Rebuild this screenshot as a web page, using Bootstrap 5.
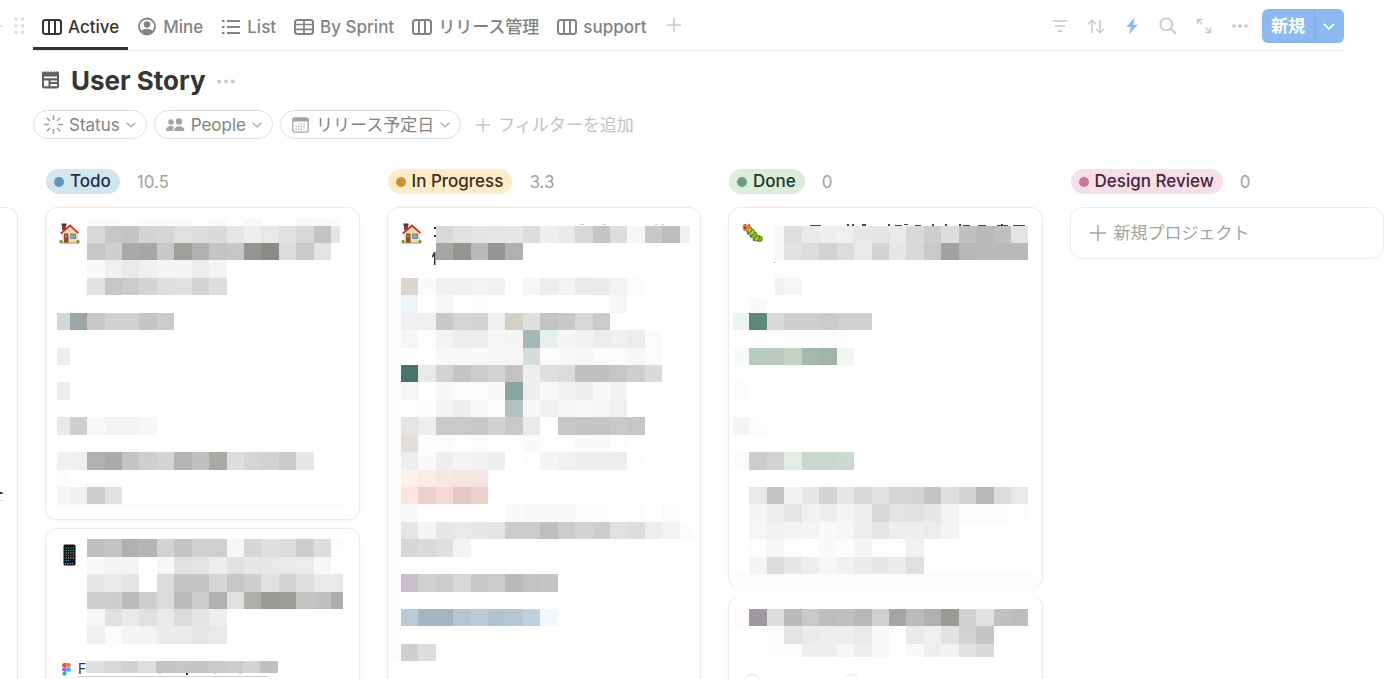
<!DOCTYPE html>
<html lang="ja">
<head>
<meta charset="utf-8">
<meta name="viewport" content="width=device-width, initial-scale=1">
<title>User Story</title>
<link href="https://cdn.jsdelivr.net/npm/bootstrap@5.3.0/dist/css/bootstrap.min.css" rel="stylesheet">
<style>
  body { font-family: Inter, "Noto Sans CJK JP", sans-serif; font-size: 17px; line-height: 24px; color: #37352f; background: #fff; }
  svg { display: block; flex: none; }
  .ico { fill: none; stroke: currentColor; stroke-width: 2; }
  .ico-thin { fill: none; stroke: currentColor; stroke-width: 1.6; }
  .topbar { margin-left: 33px; margin-right: 56px; height: 51px; border-bottom: 1px solid #e9e9e8; }
  .grip { position: absolute; left: 0; top: 16px; color: #dcdcda; }
  .view-tab { height: 50px; padding: 6px 9px 0; gap: 6px; font-weight: 500; color: #84837f; text-decoration: none; white-space: nowrap; border-bottom: 3px solid transparent; }
  .view-tab.active { color: #37352f; border-color: #37352f; }
  .tools { padding-top: 2px; }
  .tool { border: 0; background: none; padding: 0; width: 36px; height: 34px; color: #c8c8c6; display: flex; align-items: center; justify-content: center; }
  .tool.on { color: #8cbaf0; }
  .btn-new { background: #8bb9f0; color: #fff; border: 0; height: 34px; font-weight: 600; line-height: 34px; padding: 0 9px; }
  .btn-new:first-child { border-radius: 6px 0 0 6px; border-right: 1px solid #7fade4; }
  .btn-new:last-child { border-radius: 0 6px 6px 0; width: 29px; padding: 0 8px; }
  h1 { font-size: 26px; line-height: 32px; font-weight: 700; margin: 0; }
  .head { padding: 14px 0 0 41px; gap: 11px; }
  .head > svg:first-child { margin-bottom: 4px; }
  .head .more { color: #c8c8c6; }
  .filters { padding: 13px 33px 0; gap: 7px; }
  .pill { height: 29px; border: 1px solid #dededc; border-radius: 15px; background: #fff; color: #84837f; padding: 0 10px; gap: 6px; white-space: nowrap; }
  .pill .chev { color: #a5a4a1; }
  .add-filter { border: 0; background: none; color: #c3c3c1; padding: 0 8px; gap: 8px; }
  .board { gap: 27px; padding-right: 16px; margin-top: 30px; }
  .lane { flex: 1 1 0; min-width: 0; }
  .lane-edge { flex: 0 0 18px; margin-top: 38px; border: 1px solid #e9e9e9; border-left: 0; border-bottom: 0; border-radius: 0 12px 0 0; }
  .lane-head { height: 25px; gap: 17px; margin: 0 1px 13px; color: #a3a29f; }
  .status { border-radius: 13px; height: 25px; line-height: 25px; padding: 0 9px 0 8px; gap: 6px; font-weight: 500; }
  .dot { width: 10px; height: 10px; border-radius: 50%; background: currentColor; }
  .st-todo { background: #d3e5ef; color: #183347; } .st-todo .dot { background: #5b97bd; }
  .st-prog { background: #fdecc8; color: #402c1b; } .st-prog .dot { background: #cb912f; }
  .st-done { background: #dbeddb; color: #1c3829; } .st-done .dot { background: #6c9b7d; }
  .st-rev { background: #f5e0e9; color: #4c2337; } .st-rev .dot { background: #cd749f; }
  .story { border: 1px solid #ebebea; border-radius: 12px; box-shadow: 0 1px 3px rgba(15,15,15,.05); padding: 10px 4px 12px; overflow: hidden; background: #fff; flex: none; }
  .story-title { padding-left: 9px; gap: 7px; }
  .story-title > svg:first-child { margin-top: 5px; }
  .story-link { padding-left: 12px; gap: 7px; }
  .story-link > svg { margin-top: 2px; }
  .new-item { height: 52px; border: 1px solid #ebebea; border-radius: 12px; background: #fff; color: #a3a29f; padding: 0 19px; gap: 8px; text-align: left; }
  .figma-link { color: #37352f; text-decoration: none; font-size: 14px; line-height: 15px; border-bottom: 1px solid #cfcfcd; }
  .seam { left: 5px; right: 4px; top: -23px; height: 24px; background: linear-gradient(#fcfcfc 17px, #fefefe 17px); }
</style>
</head>
<body>
<svg width="0" height="0" class="position-absolute" aria-hidden="true">
  <symbol id="i-board" viewBox="0 0 20 16"><rect x="1" y="1" width="18" height="14" rx="2.5"/><path d="M7 1v14M13 1v14"/></symbol>
  <symbol id="i-chev" viewBox="0 0 10 6"><path d="M.7.8 5 5 9.300.8"/></symbol>
  <symbol id="i-plus" viewBox="0 0 14 14"><path d="M7 0v14M0 7h14"/></symbol>
  <symbol id="i-dots" viewBox="0 0 16 4"><g fill="currentColor" stroke="none"><circle cx="2" cy="2" r="1.8"/><circle cx="8" cy="2" r="1.8"/><circle cx="14" cy="2" r="1.8"/></g></symbol>
  <symbol id="e-house" viewBox="0 0 21 21">
    <path d="M3 1h4v6H3z" fill="#8d3a36"/><path d="M2.500.5h5v2h-5z" fill="#5e2b2b"/>
    <path d="M3 9.500 11 2l8 7.500V20H3z" fill="#f3dcae"/>
    <path d="M11 1.200 20 9.500l-1.200 1.300L11 3.800 2.300 11.300 1 9.900z" fill="#c8302c"/>
    <path d="M5 10.500h4.500V20H5z" fill="#8a4a2c"/><path d="M6 12h2.300v2.600H6z" fill="#4f9fd6"/>
    <path d="M11.300 10.500h5.700v5.600h-5.700z" fill="#9c6a3c"/><path d="M12 11.200h4.300v4.200H12z" fill="#5fb2e4"/>
    <circle cx="2" cy="18.700" r="1.700" fill="#6b9a2e"/><circle cx="19" cy="18.700" r="1.700" fill="#6b9a2e"/><path d="M3 19.500h16v1H3z" fill="#b98c5c"/>
  </symbol>
</svg>

<main class="vh-100 overflow-hidden d-flex flex-column position-relative">
  <svg class="grip" width="25" height="20" viewBox="0 0 25 20" fill="currentColor" aria-hidden="true"><path d="M0 9h2v1.500H0z"/><g><circle cx="16" cy="3" r="1.700"/><circle cx="22.500" cy="3" r="1.700"/><circle cx="16" cy="9.700" r="1.700"/><circle cx="22.500" cy="9.700" r="1.700"/><circle cx="16" cy="16.300" r="1.700"/><circle cx="22.500" cy="16.300" r="1.700"/></g></svg>
  <header class="topbar d-flex justify-content-between flex-shrink-0">
    <nav class="d-flex align-items-start" aria-label="ビュー">
      <a href="#" class="view-tab active d-flex align-items-center"><svg class="ico" width="20" height="16"><use href="#i-board"/></svg>Active</a>
      <a href="#" class="view-tab d-flex align-items-center"><svg width="20" height="20" viewBox="0 0 20 20"><circle cx="10" cy="9.500" r="8" fill="none" stroke="currentColor" stroke-width="1.800"/><circle cx="10" cy="7.500" r="3.200" fill="currentColor"/><path d="M4 14.500c1.500-3.600 10.500-3.600 12 0-2.500 4-9.500 4-12 0z" fill="currentColor"/></svg>Mine</a>
      <a href="#" class="view-tab d-flex align-items-center"><svg class="ico" width="20" height="16" viewBox="0 0 20 16"><path d="M6 2h13M6 8h13M6 14h13M1 2h2.500M1 8h2.500M1 14h2.500"/></svg>List</a>
      <a href="#" class="view-tab d-flex align-items-center"><svg class="ico" width="20" height="16" viewBox="0 0 20 16"><rect x="1" y="1" width="18" height="14" rx="2.500"/><path d="M1 5.500h18M1 10.300h18M10 1v14" stroke-width="1.700"/></svg>By Sprint</a>
      <a href="#" class="view-tab d-flex align-items-center"><svg class="ico" width="20" height="16"><use href="#i-board"/></svg>リリース管理</a>
      <a href="#" class="view-tab d-flex align-items-center"><svg class="ico" width="20" height="16"><use href="#i-board"/></svg>support</a>
      <button class="tool mt-2" aria-label="ビューを追加"><svg width="14" height="14" fill="none" stroke="currentColor" stroke-width="1.500"><use href="#i-plus"/></svg></button>
    </nav>
    <div class="tools d-flex align-items-center h-100">
      <button class="tool" aria-label="フィルター"><svg class="ico-thin" width="16" height="12" viewBox="0 0 16 12"><path d="M.5 1h15M3 6h10M5.500 11h5"/></svg></button>
      <button class="tool" aria-label="並べ替え"><svg width="18" height="15" viewBox="0 0 18 15" fill="none" stroke="currentColor" stroke-width="1.500"><path d="M5 14V1.500M1 5.300 5 1.300l4 4M13 1v12.500M9.200 9.700l3.900 4 4-4"/></svg></button>
      <button class="tool on" aria-label="オートメーション"><svg width="12" height="18" viewBox="0 0 12 18" fill="currentColor"><path d="M8.500.5.5 10h4.300L3 17.500l8.700-9.800H7.200z"/></svg></button>
      <button class="tool" aria-label="検索"><svg width="18" height="18" viewBox="0 0 18 18" fill="none" stroke="currentColor" stroke-width="1.800"><circle cx="7.300" cy="7.300" r="6"/><path d="m11.800 11.800 5 4.700" stroke-width="2.200"/></svg></button>
      <button class="tool" aria-label="展開"><svg width="16" height="16" viewBox="0 0 16 16" fill="none" stroke="currentColor" stroke-width="1.500"><path d="M1.500 6.500v-5h5M1.800 1.800 6.300 6.300M14.500 9.500v5h-5M14.200 14.200 9.700 9.700"/></svg></button>
      <button class="tool" aria-label="その他"><svg width="16" height="4"><use href="#i-dots"/></svg></button>
      <div class="d-flex ms-1"><button class="btn-new">新規</button><button class="btn-new" aria-label="新規メニュー"><svg width="12" height="7" fill="none" stroke="currentColor" stroke-width="1.400"><use href="#i-chev"/></svg></button></div>
    </div>
  </header>

  <div class="head d-flex align-items-center flex-shrink-0">
    <svg width="19" height="19" viewBox="0 0 19 19" fill="#62605b" aria-hidden="true"><path fill-rule="evenodd" d="M1 1l1.500 1.500L4 1l1.500 1.500L7 1l1.500 1.500L10 1l1.500 1.500L13 1l1.500 1.500L16 1l2 1.500V16a2.500 2.500 0 0 1-2.500 2.500h-12A2.500 2.500 0 0 1 1 16zM3 6.500v1.800h13V6.500zm0 4v5.700h4.500v-5.700zm6.500 0V12H16v-1.500zm0 3.500v2.200H16V14z"/></svg>
    <h1>User Story</h1>
    <svg class="more" width="18" height="5"><use href="#i-dots"/></svg>
  </div>

  <div class="filters d-flex align-items-center flex-shrink-0">
    <button class="pill d-flex align-items-center"><svg width="19" height="19" viewBox="0 0 19 19" fill="none" stroke="#a5a4a1" stroke-width="1.600"><path d="M9.500 0v5M9.500 14v5M0 9.500h5M14 9.500h5M2.800 2.800l3.200 3.200M13 13l3.200 3.200M16.200 2.800 13 6M6 13l-3.200 3.200"/></svg>Status<svg class="chev" width="10" height="6" fill="none" stroke="currentColor" stroke-width="1.200"><use href="#i-chev"/></svg></button>
    <button class="pill d-flex align-items-center"><svg width="20" height="14" viewBox="0 0 20 14" fill="#a5a4a1"><circle cx="6" cy="4" r="2.800"/><circle cx="14" cy="3.500" r="3.200"/><path d="M1 13c0-6 7-6 8-3.500C8 11 7.800 12 7.800 13zM9 13c0-6.500 10.500-6.500 10.500 0z"/></svg>People<svg class="chev" width="10" height="6" fill="none" stroke="currentColor" stroke-width="1.200"><use href="#i-chev"/></svg></button>
    <button class="pill d-flex align-items-center"><svg width="19" height="16" viewBox="0 0 19 16"><rect x="1.800" y=".8" width="15.400" height="14.400" rx="2" fill="none" stroke="#a5a4a1" stroke-width="1.300"/><path d="M2 1h15v3.500H2z" fill="#a5a4a1"/><path d="M7.500 7.200h7M4.500 9.700h10M4.500 12.200h8" stroke="#a5a4a1" stroke-dasharray="1.300 1.300" stroke-width="1.200"/></svg>リリース予定日<svg class="chev" width="10" height="6" fill="none" stroke="currentColor" stroke-width="1.200"><use href="#i-chev"/></svg></button>
    <button class="add-filter d-flex align-items-center"><svg width="14" height="14" fill="none" stroke="currentColor" stroke-width="1.300"><use href="#i-plus"/></svg>フィルターを追加</button>
  </div>

  <div class="board d-flex flex-fill overflow-hidden">
    <div class="lane-edge"><svg width="4" height="300" aria-hidden="true"><path d="M0 284h2.500v2H0z" fill="#37352f"/><path d="M0 292h4v1H0z" fill="#dcdcda"/></svg></div>

    <section class="lane">
      <div class="lane-head d-flex align-items-center"><span class="status st-todo d-flex align-items-center"><span class="dot"></span>Todo</span><span>10.5</span></div>
      <div class="d-flex flex-column gap-2">
        <article class="story">
          <div class="story-title d-flex"><svg width="21" height="21"><use href="#e-house"/></svg>
            <svg class="mosaic" viewBox="87 219 257 80" data-key="todoTitle" data-right="340"></svg></div>
          <svg class="mosaic" viewBox="50 299 295 209" data-key="todoBody" data-left="57"></svg>
        </article>
        <article class="story">
          <div class="story-title d-flex"><svg width="21" height="22" viewBox="0 0 21 22"><rect x="4.500" y=".5" width="12" height="21" rx="1.500" fill="#111"/><g stroke-width="1.200" stroke-dasharray="1.200 1.200"><path d="M6.500 4h8.500" stroke="#5ad35a"/><path d="M6.500 6.500h8.500" stroke="#4fb4ee"/><path d="M6.500 9h8.500" stroke="#e8c64a"/><path d="M6.500 11.500h8.500" stroke="#e06a5a"/><path d="M6.500 14h8.500" stroke="#ddd"/><path d="M6.500 16.500h5" stroke="#39a8f0"/><path d="M6 19.700h9.500" stroke="#46c883"/></g></svg>
            <svg class="mosaic" viewBox="87 540 256 122" data-key="phoneTitle"></svg></div>
          <div class="story-link d-flex"><svg width="9" height="13" viewBox="0 0 9 13"><path d="M4.500 0h-2.300a2.100 2.100 0 0 0 0 4.300h2.300z" fill="#f24e1e"/><path d="M4.500 0h2.300a2.100 2.100 0 0 1 0 4.300H4.500z" fill="#ff7262"/><path d="M4.500 4.300H2.200a2.100 2.100 0 0 0 0 4.300h2.300z" fill="#a259ff"/><circle cx="6.700" cy="6.500" r="2.200" fill="#1abcfe"/><path d="M4.500 8.600H2.200a2.100 2.100 0 1 0 2.300 2.200z" fill="#0acf83"/></svg>
            <a href="#" class="figma-link d-flex" aria-label="Figma">F<svg class="mosaic" viewBox="87 662 182 15" data-key="figma" data-right="279" data-bottom="674" overflow="visible"><path d="M187 674h2v2h-2z" fill="#37352f"/><path d="M160 674h2v1h-2zM215 674h2v1h-2zM240 674h3v1h-3z" fill="#ccc"/></svg></a></div>
        </article>
      </div>
    </section>

    <section class="lane">
      <div class="lane-head d-flex align-items-center"><span class="status st-prog d-flex align-items-center"><span class="dot"></span>In Progress</span><span>3.3</span></div>
      <article class="story">
        <div class="story-title d-flex"><svg width="21" height="21"><use href="#e-house"/></svg>
          <svg class="mosaic" viewBox="429 219 263 59" data-key="progTitle" data-right="690"><path d="M434 228h2v2h-2zM434 236h2v2h-2zM434 253h1.500v13H434zM434 253v4l-2 2v-2z" fill="#37352f"/><path d="M580 225h4v1h-4zM603 225h3v1h-3zM655 225h3v1h-3zM661 225h3v1h-3z" fill="#ccc"/></svg></div>
        <svg class="mosaic" viewBox="392 278 302 440" data-key="progBody" data-left="393" data-top="279"></svg>
      </article>
    </section>

    <section class="lane">
      <div class="lane-head d-flex align-items-center"><span class="status st-done d-flex align-items-center"><span class="dot"></span>Done</span><span>0</span></div>
      <div class="d-flex flex-column gap-2">
        <article class="story">
          <div class="story-title d-flex"><svg width="21" height="21" viewBox="0 0 21 21"><path d="M1 2.500 4 1.500M8 3 6.500.8" stroke="#333" stroke-width="1"/><g stroke="#3d5a12" stroke-width=".7"><circle cx="17.500" cy="15.800" r="2.900" fill="#8db526"/><circle cx="14.500" cy="15" r="3" fill="#9ac92f"/><circle cx="12" cy="12" r="3.200" fill="#8fbe2b"/><circle cx="9.300" cy="9" r="3.200" fill="#a4d238"/><circle cx="7" cy="6.500" r="3" fill="#9ac92f"/></g><circle cx="4" cy="4.700" r="3.300" fill="#ee7d22"/><circle cx="3" cy="4.700" r="1" fill="#432"/><path d="M5 9.500l1 2M8 12.500l1 2M11 16l1 2" stroke="#333"/></svg>
            <svg class="mosaic" viewBox="770 219 259 80" data-key="doneTitle" data-left="775" data-top="227"><path d="M810 226h11v1h-11zM847 225h2v2h-2zM852 225h2v2h-2zM862 225h4v2h-4zM888 225h2v2h-2zM895 226h7v1h-7zM904 225h4v1h-4zM915 226h6v1h-6zM932 225h2v2h-2zM945 225h2v2h-2zM959 225h2v2h-2zM963 226h7v1h-7zM978 226h8v1h-8zM997 226h11v1h-11zM1001 225h2v2h-2zM1013 226h12v1h-12z" fill="#45433e"/><path d="M774 263h1v1h-1z" fill="#888"/></svg></div>
          <svg class="mosaic" viewBox="733 299 296 277" data-key="doneBody"></svg>
        </article>
        <article class="story position-relative overflow-visible">
          <div class="seam position-absolute"></div>
          <svg class="mosaic" viewBox="733 608 296 100" data-key="nextBody" data-bottom="658"><g fill="#fff" stroke="#e4e4e2"><circle cx="752" cy="684" r="8.500"/><circle cx="851" cy="684" r="8.500"/></g></svg>
        </article>
      </div>
    </section>

    <section class="lane">
      <div class="lane-head d-flex align-items-center"><span class="status st-rev d-flex align-items-center"><span class="dot"></span>Design Review</span><span>0</span></div>
      <button class="new-item w-100 d-flex align-items-center"><svg width="16" height="16" viewBox="0 0 14 14" fill="none" stroke="currentColor" stroke-width="1.300"><use href="#i-plus"/></svg>新規プロジェクト</button>
    </section>
  </div>
</main>

<script>
// Redacted text: each line is "row column shade shade ..." on a shared grid; "-" leaves a cell empty.
const CELL = 17.43;
const data = {
todoTitle: `12 5 fb fb fd fb fb fb - fb - f8 - - f7 fa fc
13 5 d9 c7 c4 d4 d6 e0 dc db e6 ee e8 e0 d8 c3 e6
14 5 c7 cf a9 a7 c8 9f9f9b b1 c4 c7 979593 8b8b86 dd ca e3
15 5 f9 f0 e9 f0 f4 f4 ec f3
16 5 e2 c6 cc d4 de e0 d3 dd`,
todoBody: `17 4 fd
18 3 d2d7da 9ca5a8 c8 d1 d1 c5 cc
20 3 ec
22 3 ec
24 3 e9 cf f8 f3 f3 f7
26 3 f1 ef b0 acabaa c4 cf d4 b4 c1 a9aaa5 dd d5 d2 ca e7
27 3 fcfcfa - fd fd
28 3 f4 f0 cc e2
29 3 fc fc fc fc fc fc fc fc fc fc fc fc fc fc fc fc fc`,
phoneTitle: `31 5 c0 c4 b0 b5 d2 c4 d0 d0 f7 d6 df dd cd dd fc
32 5 f8 f4 f3 - f7 e1 e3 ee e2 e7 e7 e9 ec f7 fe
33 5 e7 ea e4 - dc c4 c5 d6 c7 ce e1 d4 df e9 e8
34 5 cf cd bb cf dc bc cb b1 e0 aeafaa 9c9c97 9d9d98 c4 c1 ac
35 5 f6 e0 ea e1 ea dc e4 ee
36 5 ef fb f4 f4 eb eb e5 e8`,
figma: `38 5 df d8 d1 de c5 c6 c4 ca cd d3 c1 e3`,
progTitle: `13 25 d7 e1 e4 e5 e6 dd ee ea d7 c5 dc f6 c8 bd f0
14 25 a5a6a1 969691 b8 979593 b1`,
progBody: `16 22 fc dad5cf fa f0 f0 f4 f1 fe f6 ec f3 ea eb f4 fc
17 22 fc ecf5f7 fe f7 fe fc fe fe fe fe fe fe fe f7
18 22 fc ef ef c8 d5 d2 ef d6cfc4 df c4 c8 d7 cb
19 22 fc f6 fd f3 ed ee f6 f5 a4b9b5 e7eeee f5 f2 ec ef ec fb
20 22 fc fe fe f8 f8 fa f6 f6 d4dedb fb f9 f6 fb fb f7 fb
21 22 fc 42756c e8 d3 c5 cd d2 c4 ee df dc c1 c1 c6 ce db
22 22 fc f6 fe f7 fb fb fa 8aa49f ee f8 f2 ee f9 f2
23 22 fc fd fc f4 ee f9 fc b1c2c0 f6 f0 f6 f8 f7 f1
24 22 fc e5 ee ca c9 c8 d1 c9 ea fe c7 c5 c5 c9 c6
25 22 fc e2dfda fc fb fd fb fe fe fa fd - fa f9 fd
26 22 fc ebefee fa ee f4 f1 ee - fd f5 f1 ee ee ec fd
27 22 fc feeeec fceae7 f8e6e3 f7e4e1 f3e5e1
28 22 fc fee5e1 ebcfcd f5d8d5 e5c7c5 ebcfcb
29 22 fc f9 - - fe - - fa f8 f8 f9 fc fc fe fd - fb
30 22 fc e5 f5 e7 e9 e7 e4 cc cc bf cc d3 cd e1 dd ec f3 fc
31 22 fc d6 da df f3
32 22 fc
33 22 fc c9bccb d0 cd d7 c8 cb ba c2 c5
34 22 fc
35 22 fc b9cad6 a3b5c1 a3b5c1 b4c6d3 bbccd6 b0c4d0 b5c7d4 bfd1de f3f8fb
36 22 fc
37 22 fc cf dd`,
doneTitle: `13 44 f8 df ea ee f0 e7 e4 ea d9 ce dd c1 ba c0 e4
14 44 fa e2 dd d2 dc e8 d3 e7 d8 c9 a2 b6 b9 b8 b8
15 44 fd fe fe
16 44 f1 f6`,
doneBody: `17 43 fa
18 42 eef2f3 5e877e da cf cf cb d0 d0
19 43 fe fe fe fe fe
20 42 f9fbf9 b9cbbe bacbbe c2d3c1 a6b8ab a1b4a7 f1f7f2
22 42 fc
24 42 f5 fcfcfa
26 42 fc cc d3 e2ebe4 c7d8ce c7d8ce c9dacf
28 43 e8 c5 f1 e7 d4 e6 d9 e1 d6 d4 c5 df d4 b8 dd e8
29 43 f4 ee e5 f1 ee f4 ee d7 e3 e2 e7 f3 fc fc fc fd
30 43 f6 f1 f3 f4 fa f6 ec e6 ee ee ec f3
31 43 fd f6 fd - fa fc f5 fd fd f1
32 43 f5 dc e7 ee f6 f0 ea e7 eb e0`,
nextBody: `35 42 fefafa 9f98a1 dc b9 c9 be c0 b8 d0 a5 bb b0 9b9a96 d1 e1 c1 bd
36 43 fe fb e4 eb ee ed e8 f9 - e9 ef e2 d2 c5
37 44 fb fc ee ed f6 ec f8 - fa ee f1 e0 da`
};
document.querySelectorAll('.mosaic').forEach(svg => {
  const { x, y, width, height } = svg.viewBox.baseVal;
  svg.setAttribute('width', width);
  svg.setAttribute('height', height);
  svg.setAttribute('aria-hidden', 'true');
  const lim = (k, d) => Number(svg.dataset[k] || d);
  const L = lim('left', x), R = lim('right', x + width), T = lim('top', y), B = lim('bottom', y + height);
  data[svg.dataset.key].split('\n').forEach(line => {
    const [row, col, ...shades] = line.split(' ');
    shades.forEach((s, i) => {
      if (s === '-') return;
      const x0 = Math.max(L, Math.round((+col + i) * CELL)), x1 = Math.min(R, Math.round((+col + i + 1) * CELL));
      const y0 = Math.max(T, Math.round(row * CELL)), y1 = Math.min(B, Math.round((+row + 1) * CELL));
      if (x1 <= x0 || y1 <= y0) return;
      const r = document.createElementNS('http://www.w3.org/2000/svg', 'rect');
      Object.entries({ x: x0, y: y0, width: x1 - x0, height: y1 - y0, fill: '#' + (s.length === 2 ? s + s + s : s) })
        .forEach(([k, v]) => r.setAttribute(k, v));
      svg.prepend(r);
    });
  });
});
</script>
<script src="https://cdn.jsdelivr.net/npm/bootstrap@5.3.0/dist/js/bootstrap.bundle.min.js"></script>
</body>
</html>
